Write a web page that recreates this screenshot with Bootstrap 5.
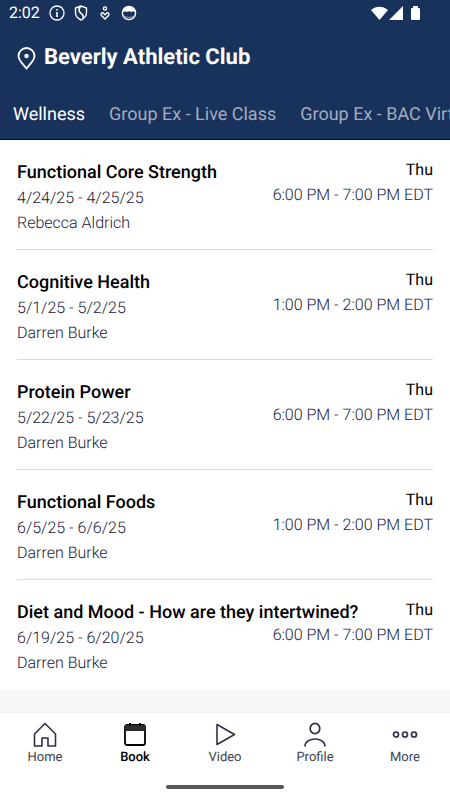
<!DOCTYPE html>
<html lang="en">
<head>
<meta charset="utf-8">
<meta name="viewport" content="width=device-width, initial-scale=1">
<title>Beverly Athletic Club</title>
<link href="https://cdn.jsdelivr.net/npm/bootstrap@5.3.0/dist/css/bootstrap.min.css" rel="stylesheet">
<style>
  body { font-family: Roboto, "Liberation Sans", sans-serif; background: #f7f8fa; color: #000; text-rendering: geometricPrecision; }
  svg { display: block; flex: none; }
  .app-header { background: #18325c; border-bottom: 1px solid #061440; }
  .status-bar { height: 28px; padding: 0 29px 2px 9px; font-size: 16px; }
  .status-bar .clock { margin-right: 9px; }
  .club-title { height: 60px; padding: 0 17px; gap: 8px; }
  .club-title h1 { font-size: 22px; line-height: 28px; font-weight: 700; }
  .class-tabs { height: 51px; gap: 24px; padding: 3px 13px 0; }
  .class-tabs .nav-link { font-size: 18px; line-height: 24px; padding: 0; color: #a3adbe; white-space: nowrap; }
  .class-tabs .nav-link.active { color: #fff; }
  .class-list { padding: 0 17px; }
  .class-row { padding: 20px 0 14px; border-bottom: 1px solid #dcdcde; color: inherit; }
  .class-row:last-child { border-bottom-color: transparent; }
  .class-info { min-width: 0; }
  .class-name { font-size: 18px; line-height: 25px; font-weight: 500; margin: 0; }
  .class-meta { font-size: 16px; line-height: 25px; font-weight: 300; color: #18203c; }
  .class-day { font-size: 16px; line-height: 20px; margin-bottom: 2px; }
  .bottom-bar { background: #fff; border-top: 1px solid #f1f2f5; padding-bottom: 11px; }
  .bottom-bar .nav-link { font-size: 13px; line-height: 18px; padding: 8px 0 18px; color: #3c4250; }
  .bottom-bar .nav-link svg { margin: 0 auto; stroke: #2d3148; }
  .bottom-bar .nav-link.active { color: #000; font-weight: 500; }
  .bottom-bar .nav-link.active svg { stroke: #000; }
  .home-handle { width: 118px; height: 4px; background: #57575b; }
</style>
<script src="https://cdn.jsdelivr.net/npm/bootstrap@5.3.0/dist/js/bootstrap.bundle.min.js" defer></script>
</head>
<body class="d-flex flex-column min-vh-100">
<header class="app-header text-white">
  <div class="status-bar d-flex align-items-center justify-content-between">
    <div class="d-flex align-items-center">
      <span class="clock">2:02</span>
      <div class="d-flex align-items-center gap-2">
        <svg width="16" height="16" viewBox="0 0 16 16" fill="none" stroke="#fff" stroke-width="1.3"><circle cx="8" cy="8" r="7"/><path d="M8 7v5M8 4v1.6" stroke-width="1.6"/></svg>
        <svg width="16" height="16" viewBox="0 0 16 16" fill="none" stroke="#fff" stroke-width="1.4"><path d="M8 1 2.5 3v4.5c0 3.6 2.3 6 5.5 7.5 3.2-1.5 5.5-3.9 5.5-7.5V3z"/><path d="M7.5 1.5C5 5 6 7 8 8.3s3 2.5 2 5.2" stroke-width="1.6"/></svg>
        <svg width="16" height="16" viewBox="0 0 16 16" fill="none" stroke="#fff" stroke-width="1.4"><circle cx="8" cy="3.500" r="1.600"/><path d="m8 14-3.500-3.500c-1.500-2 1-3.500 2.300-2L8 9.700l1.200-1.200c1.300-1.500 3.800 0 2.300 2z"/></svg>
        <svg width="16" height="16" viewBox="0 0 16 16"><circle cx="8" cy="8" r="6.600" fill="none" stroke="#fff" stroke-width="1.400"/><path d="M2 7C2.500 0 13.500 0 14 7L12 6.200 10.500 7 8 6.300 5.500 7 4 6.200z" fill="#fff"/><path d="M4 11.500q4 2.500 8 0" fill="none" stroke="#fff" stroke-opacity=".6"/></svg>
      </div>
    </div>
    <svg width="50" height="16" viewBox="0 0 50 16" fill="#fff"><path d="M0 5C5 .5 12 .5 17 5L8.500 15zM18 15 32 1v14zM40 4q0-1 1-1h1V1h5v2h1q1 0 1 1v10q0 1-1 1h-7q-1 0-1-1z"/></svg>
  </div>
  <div class="club-title d-flex align-items-center">
    <svg width="19" height="23" viewBox="0 0 19 23" fill="none" stroke="#fff" stroke-width="1.8"><path d="M9.500 21.500C6 17 1.500 13.500 1.500 9a8 8 0 0 1 16 0c0 4.500-4.500 8-8 12.500z"/><circle cx="9.500" cy="9" r="2.200" fill="#fff" stroke="none"/></svg>
    <h1 class="m-0">Beverly Athletic Club</h1>
  </div>
  <nav class="class-tabs nav flex-nowrap align-items-center overflow-hidden" aria-label="Class types">
    <a class="nav-link active" href="#wellness">Wellness</a>
    <a class="nav-link" href="#live">Group Ex - Live Class</a>
    <a class="nav-link" href="#virtual">Group Ex - BAC Virtual</a>
  </nav>
</header>
<main class="flex-grow-1">
  <div class="class-list bg-white">
    <a href="#core" class="class-row d-flex justify-content-between text-decoration-none">
      <div class="class-info text-nowrap"><h2 class="class-name">Functional Core Strength</h2><div class="class-meta">4/24/25 - 4/25/25</div><div class="class-meta">Rebecca Aldrich</div></div>
      <div class="text-end text-nowrap"><div class="class-day">Thu</div><div class="class-meta">6:00 PM - 7:00 PM EDT</div></div>
    </a>
    <a href="#cognitive" class="class-row d-flex justify-content-between text-decoration-none">
      <div class="class-info text-nowrap"><h2 class="class-name">Cognitive Health</h2><div class="class-meta">5/1/25 - 5/2/25</div><div class="class-meta">Darren Burke</div></div>
      <div class="text-end text-nowrap"><div class="class-day">Thu</div><div class="class-meta">1:00 PM - 2:00 PM EDT</div></div>
    </a>
    <a href="#protein" class="class-row d-flex justify-content-between text-decoration-none">
      <div class="class-info text-nowrap"><h2 class="class-name">Protein Power</h2><div class="class-meta">5/22/25 - 5/23/25</div><div class="class-meta">Darren Burke</div></div>
      <div class="text-end text-nowrap"><div class="class-day">Thu</div><div class="class-meta">6:00 PM - 7:00 PM EDT</div></div>
    </a>
    <a href="#foods" class="class-row d-flex justify-content-between text-decoration-none">
      <div class="class-info text-nowrap"><h2 class="class-name">Functional Foods</h2><div class="class-meta">6/5/25 - 6/6/25</div><div class="class-meta">Darren Burke</div></div>
      <div class="text-end text-nowrap"><div class="class-day">Thu</div><div class="class-meta">1:00 PM - 2:00 PM EDT</div></div>
    </a>
    <a href="#diet" class="class-row d-flex justify-content-between text-decoration-none">
      <div class="class-info text-nowrap"><h2 class="class-name">Diet and Mood - How are they intertwined?</h2><div class="class-meta">6/19/25 - 6/20/25</div><div class="class-meta">Darren Burke</div></div>
      <div class="text-end text-nowrap"><div class="class-day">Thu</div><div class="class-meta">6:00 PM - 7:00 PM EDT</div></div>
    </a>
  </div>
</main>
<nav class="bottom-bar" aria-label="Main">
  <div class="d-flex text-center">
    <a class="nav-link col" href="#home"><svg width="28" height="28" viewBox="0 0 28 28" fill="none" stroke-width="1.6" stroke-linejoin="round"><path d="M3.500 13 14 2.500 24.500 13v12H17v-8h-6v8H3.500z"/></svg>Home</a>
    <a class="nav-link active col" href="#book"><svg width="28" height="28" viewBox="0 0 28 28" fill="none" stroke-width="1.8"><rect x="4" y="4" width="20" height="20" rx="2"/><path d="M4 4h20v6H4z" fill="#2b2b2b" stroke="none"/><path d="M9 2v3M19 2v3"/></svg>Book</a>
    <a class="nav-link col" href="#video"><svg width="28" height="28" viewBox="0 0 28 28" fill="none" stroke-width="1.6" stroke-linejoin="round"><path d="M6 3.500v20l17.500-10z"/></svg>Video</a>
    <a class="nav-link col" href="#profile"><svg width="28" height="28" viewBox="0 0 28 28" fill="none" stroke-width="1.7"><ellipse cx="14" cy="7.500" rx="4.800" ry="5.200"/><path d="M4 25.500c0-10 20-10 20 0"/></svg>Profile</a>
    <a class="nav-link col" href="#more"><svg width="28" height="28" viewBox="0 0 28 28" fill="none" stroke-width="1.7"><circle cx="5" cy="13.500" r="2.500"/><circle cx="14" cy="13.500" r="2.500"/><circle cx="23" cy="13.500" r="2.500"/></svg>More</a>
  </div>
  <div class="home-handle rounded-pill mx-auto"></div>
</nav>
</body>
</html>
